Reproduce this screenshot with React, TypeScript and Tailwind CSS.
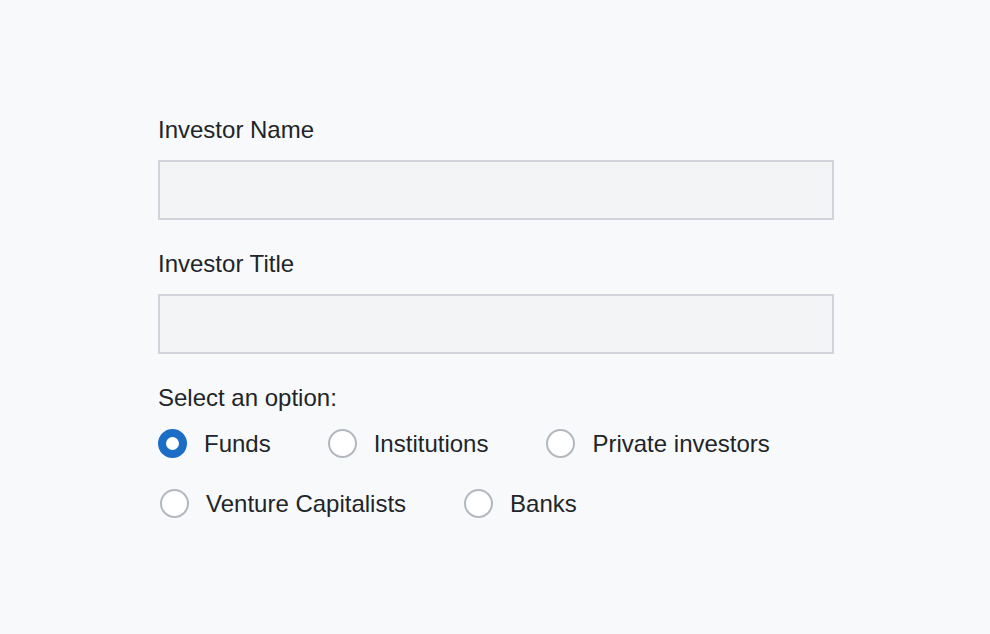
import { useState } from "react";

const rowOne = ["Funds", "Institutions", "Private investors"];
const rowTwo = ["Venture Capitalists", "Banks"];

function Radio({ label, checked, onSelect, className = "" }: { label: string; checked: boolean; onSelect: () => void; className?: string }) {
  return (
    <label className={`flex items-center gap-[17px] cursor-pointer ${className}`} onClick={onSelect}>
      <span
        className={
          checked
            ? "w-[29px] h-[29px] rounded-full border-[8px] border-[#1c6dc5] bg-white shrink-0"
            : "w-[29px] h-[29px] rounded-full border-2 border-[#b3b8bf] bg-white shrink-0"
        }
      />
      <span className="pt-[2px]">{label}</span>
    </label>
  );
}

export default function App() {
  const [selected, setSelected] = useState("Funds");

  return (
    <div
      className="min-h-[634px] bg-[#f8f9fb] text-[#212529] text-[24px]"
      style={{ fontFamily: '"Liberation Sans", Arial, sans-serif' }}
    >
      <div className="pl-[158px] pt-[114px] w-[834px]">
        <div className="leading-[32px] mb-[14px]">Investor Name</div>
        <input className="block w-[676px] h-[60px] border-2 border-[#d1d5db] bg-[#f3f4f6] outline-none px-3" />

        <div className="leading-[32px] mt-[28px] mb-[14px]">Investor Title</div>
        <input className="block w-[676px] h-[60px] border-2 border-[#d1d5db] bg-[#f3f4f6] outline-none px-3" />

        <div className="leading-[32px] mt-[28px]">Select an option:</div>
        <div className="flex mt-[14px] h-[30px] leading-[30px]">
          {rowOne.map((o, i) => (
            <Radio
              key={o}
              label={o}
              checked={selected === o}
              onSelect={() => setSelected(o)}
              className={i === 1 ? "ml-[57px]" : i === 2 ? "ml-[58px]" : ""}
            />
          ))}
        </div>
        <div className="flex gap-[58px] mt-[30px] pl-[2px] h-[30px] leading-[30px]">
          {rowTwo.map((o) => (
            <Radio key={o} label={o} checked={selected === o} onSelect={() => setSelected(o)} />
          ))}
        </div>
      </div>
    </div>
  );
}
